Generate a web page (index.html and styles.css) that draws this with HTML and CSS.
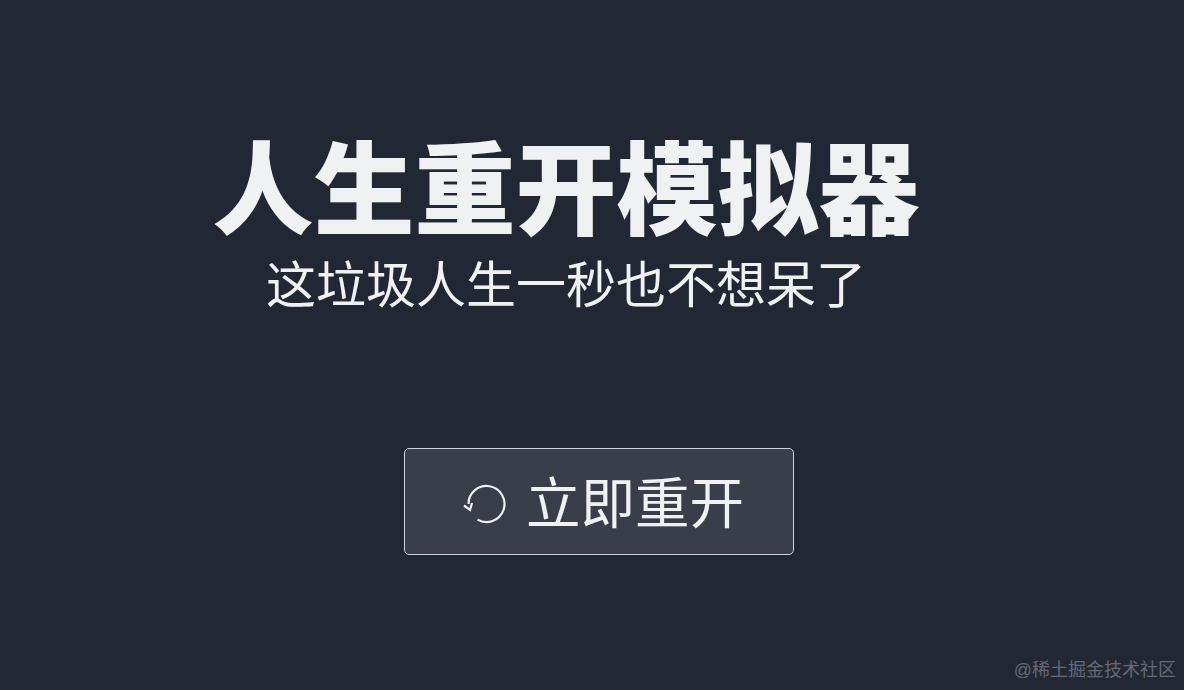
FILE: index.html
```html
<!DOCTYPE html>
<html lang="zh-CN">
<head>
    <meta charset="UTF-8">
    <meta name="viewport" content="width=device-width, initial-scale=1.0">
    <title>人生重开模拟器</title>
    <link rel="stylesheet" href="styles.css">
</head>
<body>
    <div class="page">
        <div class="intro">
            <h1 class="title">人生重开模拟器</h1>
            <div class="subtitle">这垃圾人生一秒也不想呆了</div>
        </div>
        <button class="restart-btn">
            <svg class="restart-icon" viewBox="0 0 46 46" fill="none" stroke="currentColor" stroke-width="2.2">
                <path d="M5.5 23A18 18 0 1 1 14.5 38.6"/>
                <path d="M1 24.5l6 4.5 2-7"/>
            </svg>
            <span class="restart-label">立即重开</span>
        </button>
    </div>
    <div class="watermark">@稀土掘金技术社区</div>
</body>
</html>
```

FILE: styles.css
```css
* {
    margin: 0;
    padding: 0;
    box-sizing: border-box;
}

body {
    font-family: "Liberation Sans", "Noto Sans CJK SC", sans-serif;
    background: #222833;
    color: #f0f1f3;
    height: 100vh;
    overflow: hidden;
    position: relative;
}

.page {
    display: flex;
    flex-direction: column;
    padding-top: 136px;
}

.intro {
    width: 1132px;
    text-align: center;
}

.title {
    font-size: 101px;
    font-weight: 900;
    line-height: 112px;
}

.subtitle {
    font-size: 50px;
    line-height: 72px;
    margin-top: 2px;
}

.restart-btn {
    width: 390px;
    height: 107px;
    margin: 126px 0 0 404px;
    padding-left: 9px;
    display: flex;
    align-items: center;
    justify-content: center;
    gap: 17px;
    background: #3a3e48;
    border: 1px solid #cfd2d6;
    border-radius: 5px;
    color: #f0f1f3;
    font-family: inherit;
    font-size: 54.5px;
}

.restart-label {
    margin-bottom: 4px;
}

.restart-icon {
    width: 46px;
    height: 46px;
    margin-top: 5px;
    flex-shrink: 0;
}

.watermark {
    position: absolute;
    right: 8px;
    bottom: 8px;
    font-size: 18px;
    line-height: 24px;
    color: #646973;
}
```
